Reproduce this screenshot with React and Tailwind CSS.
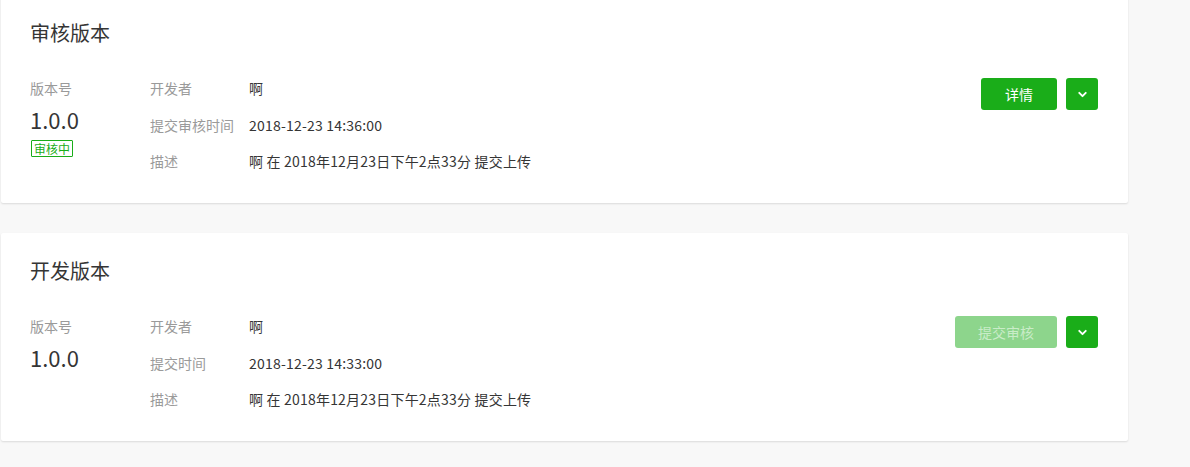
import React from "react";
import { ChevronDown } from "lucide-react";

const versions = [
  {
    title: "审核版本",
    version: "1.0.0",
    badge: "审核中",
    rows: [
      ["开发者", "啊"],
      ["提交审核时间", "2018-12-23 14:36:00"],
      ["描述", "啊 在 2018年12月23日下午2点33分 提交上传"],
    ],
    action: "详情",
    disabled: false,
  },
  {
    title: "开发版本",
    version: "1.0.0",
    badge: null,
    rows: [
      ["开发者", "啊"],
      ["提交时间", "2018-12-23 14:33:00"],
      ["描述", "啊 在 2018年12月23日下午2点33分 提交上传"],
    ],
    action: "提交审核",
    disabled: true,
  },
];

function VersionCard({ v }) {
  return (
    <div className="bg-white w-[1127px] h-[208px] ml-[1px] rounded-[2px] shadow-[0_1px_2px_rgba(0,0,0,0.12)] pl-[29px] pr-[30px] pt-[26px]">
      <h2 className="text-[20px] leading-[24px] text-[#353535]">{v.title}</h2>
      <div className="flex mt-[33px]">
        <div className="w-[120px]">
          <div className="text-[14px] leading-[20px] text-[#9a9a9a]">版本号</div>
          <div className="text-[22px] leading-[26px] text-[#353535] mt-[8px]">{v.version}</div>
          {v.badge && (
            <span className="inline-block mt-[8px] ml-[1px] border border-[#1aad19] rounded-[1px] text-[#1aad19] text-[12px] leading-[15px] px-[2px]">
              {v.badge}
            </span>
          )}
        </div>
        <div className="flex flex-col gap-[16.5px] flex-1">
          {v.rows.map(([label, value]) => (
            <div key={label} className="flex text-[14px] leading-[20px]">
              <span className="w-[99px] text-[#9a9a9a]">{label}</span>
              <span className="text-[#353535] tracking-[0.2px]">{value}</span>
            </div>
          ))}
        </div>
        <div className="flex gap-[9px] items-start">
          <button
            className={
              v.disabled
                ? "w-[102px] h-[32px] rounded-[3px] bg-[#8dd58c] text-[#c9ecc8] text-[14px]"
                : "w-[76px] h-[32px] rounded-[3px] bg-[#1aad19] text-white text-[14px]"
            }
          >
            {v.action}
          </button>
          <button className="w-[32px] h-[32px] rounded-[3px] bg-[#1aad19] flex items-center justify-center">
            <ChevronDown className="w-[13px] h-[13px] text-white" strokeWidth={3.5} />
          </button>
        </div>
      </div>
    </div>
  );
}

export default function App() {
  return (
    <div
      className="w-[1190px] h-[467px] overflow-hidden bg-[#f8f8f8]"
      style={{ fontFamily: '"Noto Sans CJK SC", "Noto Sans", sans-serif' }}
    >
      <div className="-mt-[5px] flex flex-col gap-[30px]">
        {versions.map((v) => (
          <VersionCard key={v.title} v={v} />
        ))}
      </div>
    </div>
  );
}
